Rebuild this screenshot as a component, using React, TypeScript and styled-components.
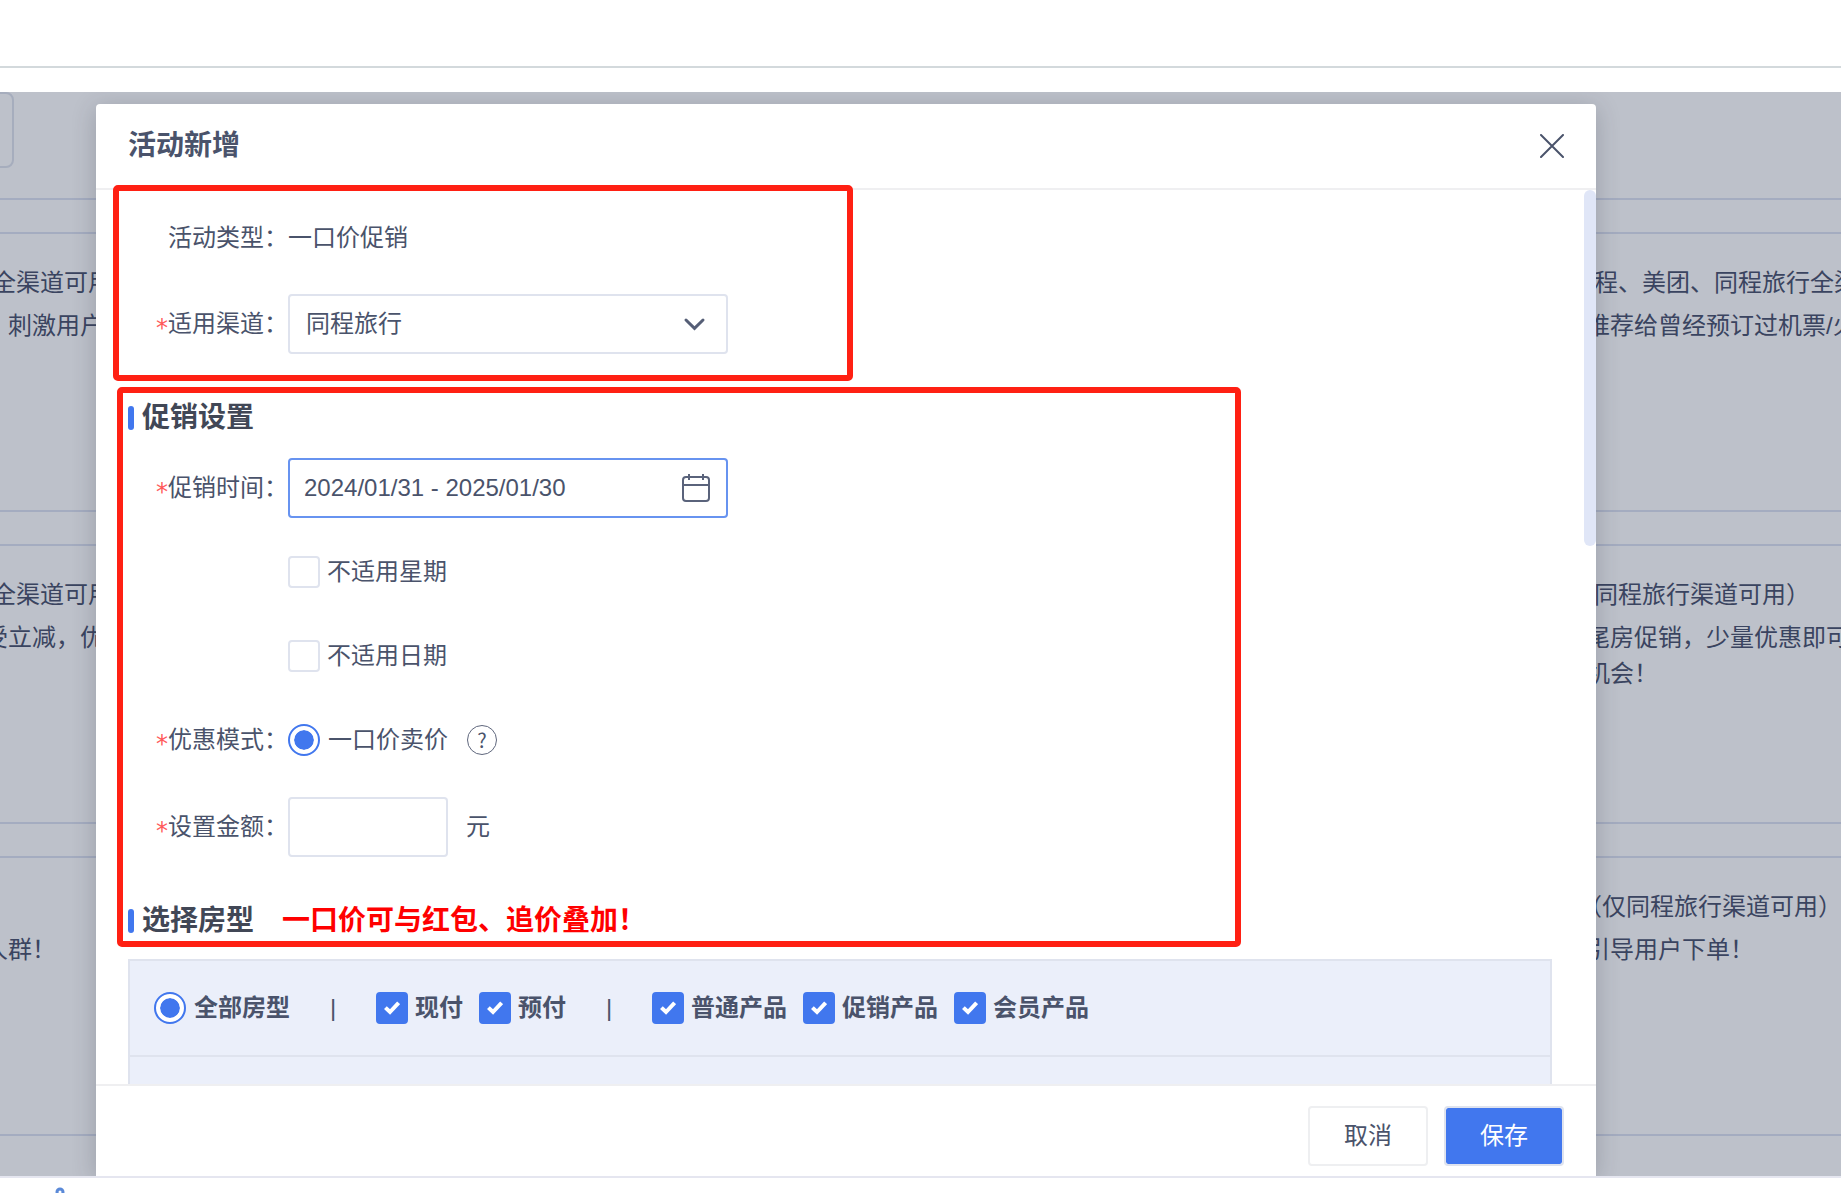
import React, { useState } from 'react';
import styled, { createGlobalStyle, css } from 'styled-components';

const color = {
  text: '#4a536b',
  heading: '#414756',
  line: '#dfe3ee',
  hair: '#efeff1',
  blue: '#4177ee',
  annotation: '#ff2013',
};

const Global = createGlobalStyle`
  *, *::before, *::after { box-sizing: border-box; }
  body {
    margin: 0;
    background: #fff;
    color: ${color.text};
    font: 400 24px/36px "Liberation Sans", "Noto Sans CJK SC", sans-serif;
  }
  button, input, select { font: inherit; color: inherit; margin: 0; }
`;

const Page = styled.div`
  display: flex;
  flex-direction: column;
  height: 100vh;
  overflow: hidden;
`;

const TopBar = styled.header`
  flex: 0 0 92px;
  &::before {
    content: '';
    display: block;
    height: 68px;
    border-bottom: 2px solid #d3d9dc;
  }
`;

const Stage = styled.main`
  position: relative;
  flex: 1;
  min-height: 0;
  overflow: hidden;
  background: #bdc1ca;
`;

const BottomBar = styled.footer`
  flex: 0 0 17px;
  overflow: hidden;
  padding: 9px 0 0 54px;
  border-top: 2px solid #e5e6f0;
  svg { display: block; }
`;

/* Dimmed page behind the dialog */
const Backdrop = styled.div`
  display: flex;
  flex-direction: column;
  height: 100%;
  margin: 0 -40px;
  color: #3a4460;
`;

const FilterPanel = styled.div`
  flex: 0 0 108px;
  border-bottom: 2px solid #a4acc0;
`;

const FilterBox = styled.div`
  width: 54px;
  height: 76px;
  border: 2px solid #a6adbd;
  border-radius: 8px;
`;

const CardColumns = styled.div`
  display: flex;
  justify-content: space-between;
  margin-top: 32px;
`;

const CardColumn = styled.div<{ $width: number }>`
  display: flex;
  flex-direction: column;
  gap: 32px;
  width: ${(p) => p.$width}px;
`;

const Card = styled.section`
  height: 280px;
  padding: 31px 0 0 22px;
  border: 2px solid #a4acc0;
  white-space: nowrap;
`;

const CardTitle = styled.div<{ $indent: number }>`
  height: 36px;
  margin-bottom: 7px;
  padding-left: ${(p) => p.$indent}px;
`;

const CardLine = styled.div<{ $indent: number }>`
  padding-left: ${(p) => p.$indent}px;
`;

/* Dialog */
const DialogLayer = styled.div`
  position: absolute;
  inset: 0;
  display: flex;
  padding: 12px 245px 0 96px;
`;

const Dialog = styled.div`
  position: relative;
  flex: 1;
  min-width: 0;
  display: flex;
  flex-direction: column;
  background: #fff;
  border-radius: 4px 4px 0 0;
  box-shadow: 0 4px 24px rgba(40, 44, 60, 0.24);
`;

const DialogHeader = styled.div`
  flex: 0 0 86px;
  display: flex;
  align-items: center;
  justify-content: space-between;
  padding: 0 32px;
  border-bottom: 2px solid ${color.hair};
`;

const DialogTitle = styled.h1`
  margin: 0;
  font-size: 28px;
  line-height: 36px;
  font-weight: 700;
`;

const IconButton = styled.button`
  display: grid;
  place-items: center;
  padding: 0;
  border: 0;
  background: none;
  cursor: pointer;
`;

const DialogBody = styled.form`
  position: relative;
  flex: 1;
  min-height: 0;
  overflow: hidden;
  padding: 18px 44px 0 32px;
`;

const ScrollThumb = styled.div`
  position: absolute;
  top: 0;
  right: 0;
  width: 12px;
  height: 356px;
  border-radius: 6px;
  background: #e0e6f7;
`;

const DialogFooter = styled.div`
  flex: 0 0 92px;
  display: flex;
  justify-content: flex-end;
  align-items: flex-start;
  gap: 16px;
  padding: 20px 32px 0;
  border-top: 2px solid ${color.hair};
`;

const Button = styled.button<{ $primary?: boolean }>`
  width: 120px;
  height: 60px;
  padding: 0;
  border: 2px solid ${(p) => (p.$primary ? '#dfe3ee' : '#eeeff1')};
  border-radius: 4px;
  background: ${(p) => (p.$primary ? color.blue : '#fff')};
  background-clip: padding-box;
  color: ${(p) => (p.$primary ? '#fff' : color.text)};
  cursor: pointer;
`;

const FieldGroup = styled.div<{ $gap: number }>`
  display: flex;
  flex-direction: column;
  gap: ${(p) => p.$gap}px;
`;

const Row = styled.div`
  display: flex;
  align-items: center;
  height: 60px;
`;

const Label = styled.label`
  flex: 0 0 160px;
  display: flex;
  justify-content: flex-end;
  height: 36px;
`;

const Star = styled.span`
  width: 12px;
  color: #ff5a5a;
  font-family: "DejaVu Sans", sans-serif;
  line-height: 44px;
`;

const boxed = css`
  height: 60px;
  border: 2px solid ${color.line};
  border-radius: 4px;
  background: #fff;
  outline: 0;
`;

const Control = styled.div`
  display: grid;
  width: 440px;
  align-items: center;
  > * { grid-area: 1 / 1; }
  > svg { justify-self: end; margin-right: 16px; pointer-events: none; }
`;

const Select = styled.select`
  ${boxed}
  width: 100%;
  padding: 0 16px;
  appearance: none;
`;

const TextInput = styled.input<{ $active?: boolean; $width?: string }>`
  ${boxed}
  width: ${(p) => p.$width ?? '100%'};
  padding: 0 14px;
  ${(p) => p.$active && 'border-color: #6793f0;'}
`;

const Unit = styled.span`
  margin-left: 18px;
`;

const Choice = styled.label<{ $strong?: boolean; $gap?: number }>`
  display: flex;
  align-items: center;
  gap: ${(p) => p.$gap ?? 7}px;
  font-weight: ${(p) => (p.$strong ? 700 : 400)};
  white-space: nowrap;
`;

const TickBox = styled.span`
  display: grid;
  place-items: center;
  > * { grid-area: 1 / 1; }
  > svg { pointer-events: none; }
`;

const TickInput = styled.input`
  appearance: none;
  width: 32px;
  height: 32px;
  border: 2px solid ${color.line};
  border-radius: 4px;
  background: #fff;
  &:checked { border-color: ${color.blue}; background: ${color.blue}; }
`;

const RadioInput = styled.input`
  appearance: none;
  width: 32px;
  height: 32px;
  padding: 4px;
  border: 2px solid ${color.blue};
  border-radius: 50%;
  background: #fff;
  &:checked { background: ${color.blue} content-box; box-shadow: inset 0 0 0 4px #fff; }
`;

const HelpButton = styled.button`
  width: 30px;
  height: 30px;
  margin-left: 19px;
  padding: 0;
  border: 1px solid #5f677d;
  border-radius: 50%;
  background: none;
  font: 400 20px/28px "Noto Sans CJK SC", sans-serif;
`;

const SectionTitle = styled.h2<{ $after: number }>`
  display: flex;
  align-items: center;
  margin: 46px 0 ${(p) => p.$after}px;
  color: ${color.heading};
  font-size: 28px;
  line-height: 36px;
  font-weight: 700;
  &::before {
    content: '';
    width: 6px;
    height: 24px;
    margin-right: 8px;
    border-radius: 3px;
    background: ${color.blue};
  }
`;

const Notice = styled.strong`
  margin-left: 28px;
  color: #ff0000;
  font-weight: 700;
`;

const RoomTable = styled.div`
  border: 2px solid ${color.line};
  background: #ebeffa;
`;

const RoomFilter = styled.div`
  display: flex;
  align-items: center;
  height: 96px;
  padding-left: 24px;
  border-bottom: 2px solid ${color.line};
`;

const RoomRow = styled.div`
  height: 96px;
`;

const ChoiceSet = styled.div`
  display: flex;
  gap: 16px;
`;

const Separator = styled.span`
  width: 86px;
  text-align: center;
`;

const Highlight = styled.div<{ $x: number; $y: number; $w: number; $h: number }>`
  position: absolute;
  left: ${(p) => p.$x}px;
  top: ${(p) => p.$y}px;
  width: ${(p) => p.$w}px;
  height: ${(p) => p.$h}px;
  border: 6px solid ${color.annotation};
  border-radius: 5px;
  pointer-events: none;
`;

type CardText = { title: string; indent: number; lines: string[] };

const leftCards: CardText[] = [
  { title: '全渠道可用', indent: 8, lines: ['，刺激用户'] },
  { title: '全渠道可用', indent: 8, lines: ['受立减，优'] },
  { title: '', indent: 8, lines: ['人群！'] },
];

const rightCards: CardText[] = [
  { title: '程、美团、同程旅行全渠', indent: 16, lines: ['推荐给曾经预订过机票/火'] },
  { title: '同程旅行渠道可用）', indent: 16, lines: ['尾房促销，少量优惠即可', '机会！'] },
  { title: '（仅同程旅行渠道可用）', indent: 0, lines: ['引导用户下单！'] },
];

function Cards({ items, width, indent }: { items: CardText[]; width: number; indent: number }) {
  return (
    <CardColumn $width={width}>
      {items.map((card, i) => (
        <Card key={i}>
          <CardTitle $indent={card.indent}>{card.title}</CardTitle>
          {card.lines.map((line) => (
            <CardLine key={line} $indent={indent}>{line}</CardLine>
          ))}
        </Card>
      ))}
    </CardColumn>
  );
}

function Tick({ label, strong, on = false }: { label: string; strong?: boolean; on?: boolean }) {
  const [checked, setChecked] = useState(on);
  return (
    <Choice $strong={strong}>
      <TickBox>
        <TickInput type="checkbox" checked={checked} onChange={(e) => setChecked(e.target.checked)} />
        {checked && (
          <svg width="16" height="14" viewBox="0 0 16 14" fill="none" stroke="#fff" strokeWidth="4">
            <path d="M1.4 6.6 6 11 14.6 1.8" />
          </svg>
        )}
      </TickBox>
      {label}
    </Choice>
  );
}

function Required({ htmlFor, children }: { htmlFor?: string; children: React.ReactNode }) {
  return (
    <Label htmlFor={htmlFor}>
      <Star>*</Star>
      {children}
    </Label>
  );
}

export default function App() {
  return (
    <Page>
      <Global />
      <TopBar />
      <Stage>
        <Backdrop aria-hidden="true">
          <FilterPanel><FilterBox /></FilterPanel>
          <CardColumns>
            <Cards items={leftCards} width={300} indent={0} />
            <Cards items={rightCards} width={327} indent={8} />
          </CardColumns>
        </Backdrop>

        <DialogLayer>
          <Dialog role="dialog" aria-labelledby="dialog-title">
            <DialogHeader>
              <DialogTitle id="dialog-title">活动新增</DialogTitle>
              <IconButton type="button" aria-label="关闭">
                <svg width="24" height="24" viewBox="0 0 24 24" stroke={color.text} strokeWidth="2" strokeLinecap="round">
                  <path d="M1 1 23 23M23 1 1 23" />
                </svg>
              </IconButton>
            </DialogHeader>

            <DialogBody>
              <FieldGroup $gap={26}>
                <Row>
                  <Label as="span">活动类型：</Label>
                  <span>一口价促销</span>
                </Row>
                <Row>
                  <Required htmlFor="channel">适用渠道：</Required>
                  <Control>
                    <Select id="channel" defaultValue="ly">
                      <option value="ly">同程旅行</option>
                    </Select>
                    <svg width="32" height="16" viewBox="0 0 32 16" fill="none" stroke="#555e76" strokeWidth="3" strokeLinecap="round">
                      <path d="M6 4 14.5 12.3 23 4" />
                    </svg>
                  </Control>
                </Row>
              </FieldGroup>

              <SectionTitle $after={22}>促销设置</SectionTitle>
              <FieldGroup $gap={27}>
                <FieldGroup $gap={24}>
                  <Row>
                    <Required htmlFor="period">促销时间：</Required>
                    <Control>
                      <TextInput id="period" $active defaultValue="2024/01/31 - 2025/01/30" />
                      <svg width="30" height="30" viewBox="0 0 30 30" fill="none" stroke="#5a637b" strokeWidth="2">
                        <rect x="1" y="4" width="26" height="24" rx="3" />
                        <path d="M1 12H27M7 1V7M21 1V7" />
                      </svg>
                    </Control>
                  </Row>
                  <Row>
                    <Label as="span" />
                    <Tick label="不适用星期" />
                  </Row>
                  <Row>
                    <Label as="span" />
                    <Tick label="不适用日期" />
                  </Row>
                  <Row>
                    <Required htmlFor="mode">优惠模式：</Required>
                    <Choice $gap={8}>
                      <RadioInput id="mode" type="radio" name="mode" defaultChecked />
                      一口价卖价
                    </Choice>
                    <HelpButton type="button" aria-label="说明">?</HelpButton>
                  </Row>
                </FieldGroup>
                <Row>
                  <Required htmlFor="amount">设置金额：</Required>
                  <TextInput id="amount" $width="160px" />
                  <Unit>元</Unit>
                </Row>
              </FieldGroup>

              <SectionTitle $after={20}>
                选择房型
                <Notice>一口价可与红包、追价叠加！</Notice>
              </SectionTitle>
              <RoomTable>
                <RoomFilter>
                  <Choice $strong $gap={8}>
                    <RadioInput type="radio" name="room" defaultChecked />
                    全部房型
                  </Choice>
                  <Separator>|</Separator>
                  <ChoiceSet>
                    <Tick label="现付" strong on />
                    <Tick label="预付" strong on />
                  </ChoiceSet>
                  <Separator>|</Separator>
                  <ChoiceSet>
                    <Tick label="普通产品" strong on />
                    <Tick label="促销产品" strong on />
                    <Tick label="会员产品" strong on />
                  </ChoiceSet>
                </RoomFilter>
                <RoomRow />
              </RoomTable>
              <ScrollThumb />
            </DialogBody>

            <DialogFooter>
              <Button type="button">取消</Button>
              <Button type="button" $primary>保存</Button>
            </DialogFooter>

            <Highlight $x={17} $y={81} $w={740} $h={196} />
            <Highlight $x={21} $y={283} $w={1124} $h={560} />
          </Dialog>
        </DialogLayer>
      </Stage>
      <BottomBar>
        <svg width="12" height="12" viewBox="0 0 12 12" fill="none" stroke="#5b8ad8" strokeWidth="3">
          <circle cx="6" cy="5" r="3" />
        </svg>
      </BottomBar>
    </Page>
  );
}
